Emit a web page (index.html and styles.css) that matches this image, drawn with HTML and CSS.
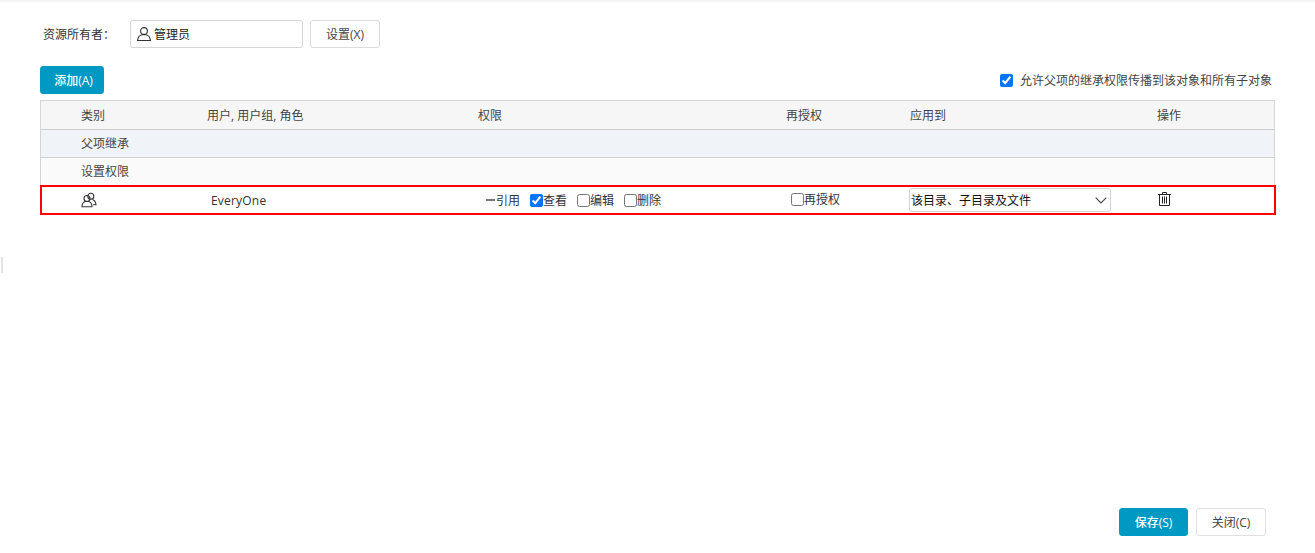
FILE: index.html
```html
<!DOCTYPE html>
<html lang="zh-CN">
<head>
<meta charset="utf-8">
<title>权限设置</title>
<link rel="stylesheet" href="styles.css">
</head>
<body>
<div class="page">
  <span class="edge-mark"></span>
  <div class="owner-row">
    <span class="owner-label">资源所有者：</span>
    <div class="owner-input">
      <svg class="icon-user" width="16" height="16" viewBox="0 0 16 16" fill="none" stroke="#333" stroke-width="1.1"><circle cx="8" cy="5" r="3.4"/><path d="M1.6 14.5c.3-3.4 2.6-5.4 4.6-5.7h3.6c2 .3 4.300 2.300 4.600 5.700z"/></svg>
      <span>管理员</span>
    </div>
    <button class="btn btn-plain btn-set">设置(X)</button>
  </div>
  <div class="toolbar">
    <button class="btn btn-primary btn-add">添加(A)</button>
    <label class="inherit-option"><input type="checkbox" checked><span>允许父项的继承权限传播到该对象和所有子对象</span></label>
  </div>
  <div class="table">
    <div class="row row-head">
      <span>类别</span><span>用户, 用户组, 角色</span><span>权限</span><span>再授权</span><span>应用到</span><span>操作</span>
    </div>
    <div class="row row-group row-inherit"><span>父项继承</span></div>
    <div class="row row-group row-set"><span>设置权限</span></div>
    <div class="row row-item">
      <span class="cell-type">
        <svg width="16" height="16" viewBox="0 0 16 16" fill="none" stroke="#333" stroke-width="1.1"><circle cx="9.800" cy="4.300" r="3"/><path d="M11.500 7.500c1.900.6 3.300 2.400 3.500 5.300h-3"/><circle cx="6" cy="6.500" r="3"/><path d="M1 14.800c0-3 1.600-4.800 3.300-5.300h3.400c1.800.5 3.300 2.300 3.300 5.300z"/></svg>
      </span>
      <span class="cell-user">EveryOne</span>
      <span class="cell-perm">
        <span class="perm perm-ref"><i class="dash"></i>引用</span>
        <label class="perm"><input type="checkbox" checked>查看</label>
        <label class="perm"><input type="checkbox">编辑</label>
        <label class="perm"><input type="checkbox">删除</label>
      </span>
      <span class="cell-regrant"><label class="perm"><input type="checkbox">再授权</label></span>
      <span class="cell-apply">
        <select class="apply-select"><option>该目录、子目录及文件</option></select>
      </span>
      <span class="cell-action">
        <svg width="13" height="14" viewBox="0 0 13 14" fill="none" stroke="#222" stroke-width="1"><path d="M0 2.500h13M4.500 2.500V.5h4v2M1.500 2.500v11h10v-11M4.500 4.500v7M6.500 4.500v7M8.500 4.500v7"/></svg>
      </span>
    </div>
  </div>
  <div class="footer">
    <button class="btn btn-primary btn-save">保存(S)</button>
    <button class="btn btn-plain btn-close">关闭(C)</button>
  </div>
</div>
</body>
</html>
```

FILE: styles.css
```css
* { box-sizing: border-box; }
html, body { margin: 0; padding: 0; height: 100%; }
body {
  font-family: "Open Sans", "Noto Sans CJK SC", sans-serif;
  font-size: 12px;
  color: #333;
  background: #fff;
  overflow: hidden;
}
.page {
  position: relative;
  height: 553px;
  border-top: 2px solid #f5f5f5;
  padding: 18px 40px 0;
  display: flex;
  flex-direction: column;
}
.edge-mark {
  position: absolute;
  left: 1px;
  top: 255px;
  width: 2px;
  height: 16px;
  background: #e4e4e4;
}
.owner-row { display: flex; align-items: center; height: 28px; padding-left: 3px; }
.owner-label { width: 87px; }
.owner-input {
  width: 173px;
  height: 28px;
  border: 1px solid #d5d5d5;
  border-radius: 3px;
  display: flex;
  align-items: center;
  gap: 2px;
  padding-left: 5px;
  color: #222;
}
.btn {
  font: inherit;
  height: 28px;
  border-radius: 3px;
  padding: 0;
  cursor: pointer;
}
.btn-plain { background: #fff; border: 1px solid #dcdcdc; color: #444; }
.btn-primary { background: #0099c4; border: 1px solid #0099c4; color: #fff; font-weight: 500; }
.btn-set { width: 70px; margin-left: 7px; }
.toolbar {
  display: flex;
  align-items: center;
  justify-content: space-between;
  height: 28px;
  margin-top: 18px;
}
.btn-add { width: 64px; padding-left: 3px; }
.inherit-option { display: flex; align-items: center; gap: 7px; margin-right: 3px; color: #444; }
.inherit-option input { margin: 0; }
.table {
  margin-top: 6px;
  width: 1235px;
  border: 1px solid #d5d5d5;
  border-bottom: 0;
}
.row {
  display: grid;
  grid-template-columns: 126px 271px 308px 124px 247px 1fr;
  align-items: center;
  padding-left: 40px;
  padding-bottom: 1px;
}
.row-head { height: 29px; background: #f6f6f6; border-bottom: 1px solid #cfcfcf; color: #444; }
.row-group { height: 28px; grid-template-columns: 1fr; border-bottom: 1px solid #cfcfcf; color: #444; }
.row-inherit { background: #f0f4f8; }
.row-set { background: #fafafa; border-bottom: 0; height: 27px; }
.row-item {
  height: 30px;
  margin: 0 -1px;
  width: 1236px;
  padding-left: 39px;
  padding-bottom: 0;
  border: 2px solid #f00;
  background: #fff;
  grid-template-columns: 130px 267px 308px 124px 247px 1fr;
}
.cell-type, .cell-action { display: flex; align-items: center; }
.cell-user { letter-spacing: .2px; }
.cell-perm { display: flex; align-items: center; padding-left: 8px; }
.perm { display: inline-flex; align-items: center; }
.perm input { margin: 0; }
.perm-ref { margin-right: 10px; }
.perm:nth-child(3), .perm:nth-child(4) { margin-left: 10px; }
.dash { display: inline-block; width: 9px; height: 2px; background: #777; margin-right: 1px; }
.cell-regrant { padding-left: 5px; }
.apply-select {
  display: block;
  width: 202px;
  height: 24px;
  margin-left: -1px;
  font: inherit;
  color: #111;
  appearance: none;
  background: #fff url("data:image/svg+xml,%3Csvg xmlns='http://www.w3.org/2000/svg' width='12' height='7' viewBox='0 0 12 7'%3E%3Cpath d='M.7.7 6 6 11.300.7' fill='none' stroke='%23444' stroke-width='1.100'/%3E%3C/svg%3E") no-repeat right 3px center;
  border: 1px solid #d5d5d5;
  border-radius: 3px;
  padding: 0 0 0 1px;
}
.cell-action { margin-top: -2px; padding-left: 1px; }
.footer {
  position: absolute;
  right: 49px;
  top: 506px;
  display: flex;
  gap: 8px;
}
.btn-save { width: 69px; }
.btn-close { width: 70px; border-color: #e0e0e0; }
```
